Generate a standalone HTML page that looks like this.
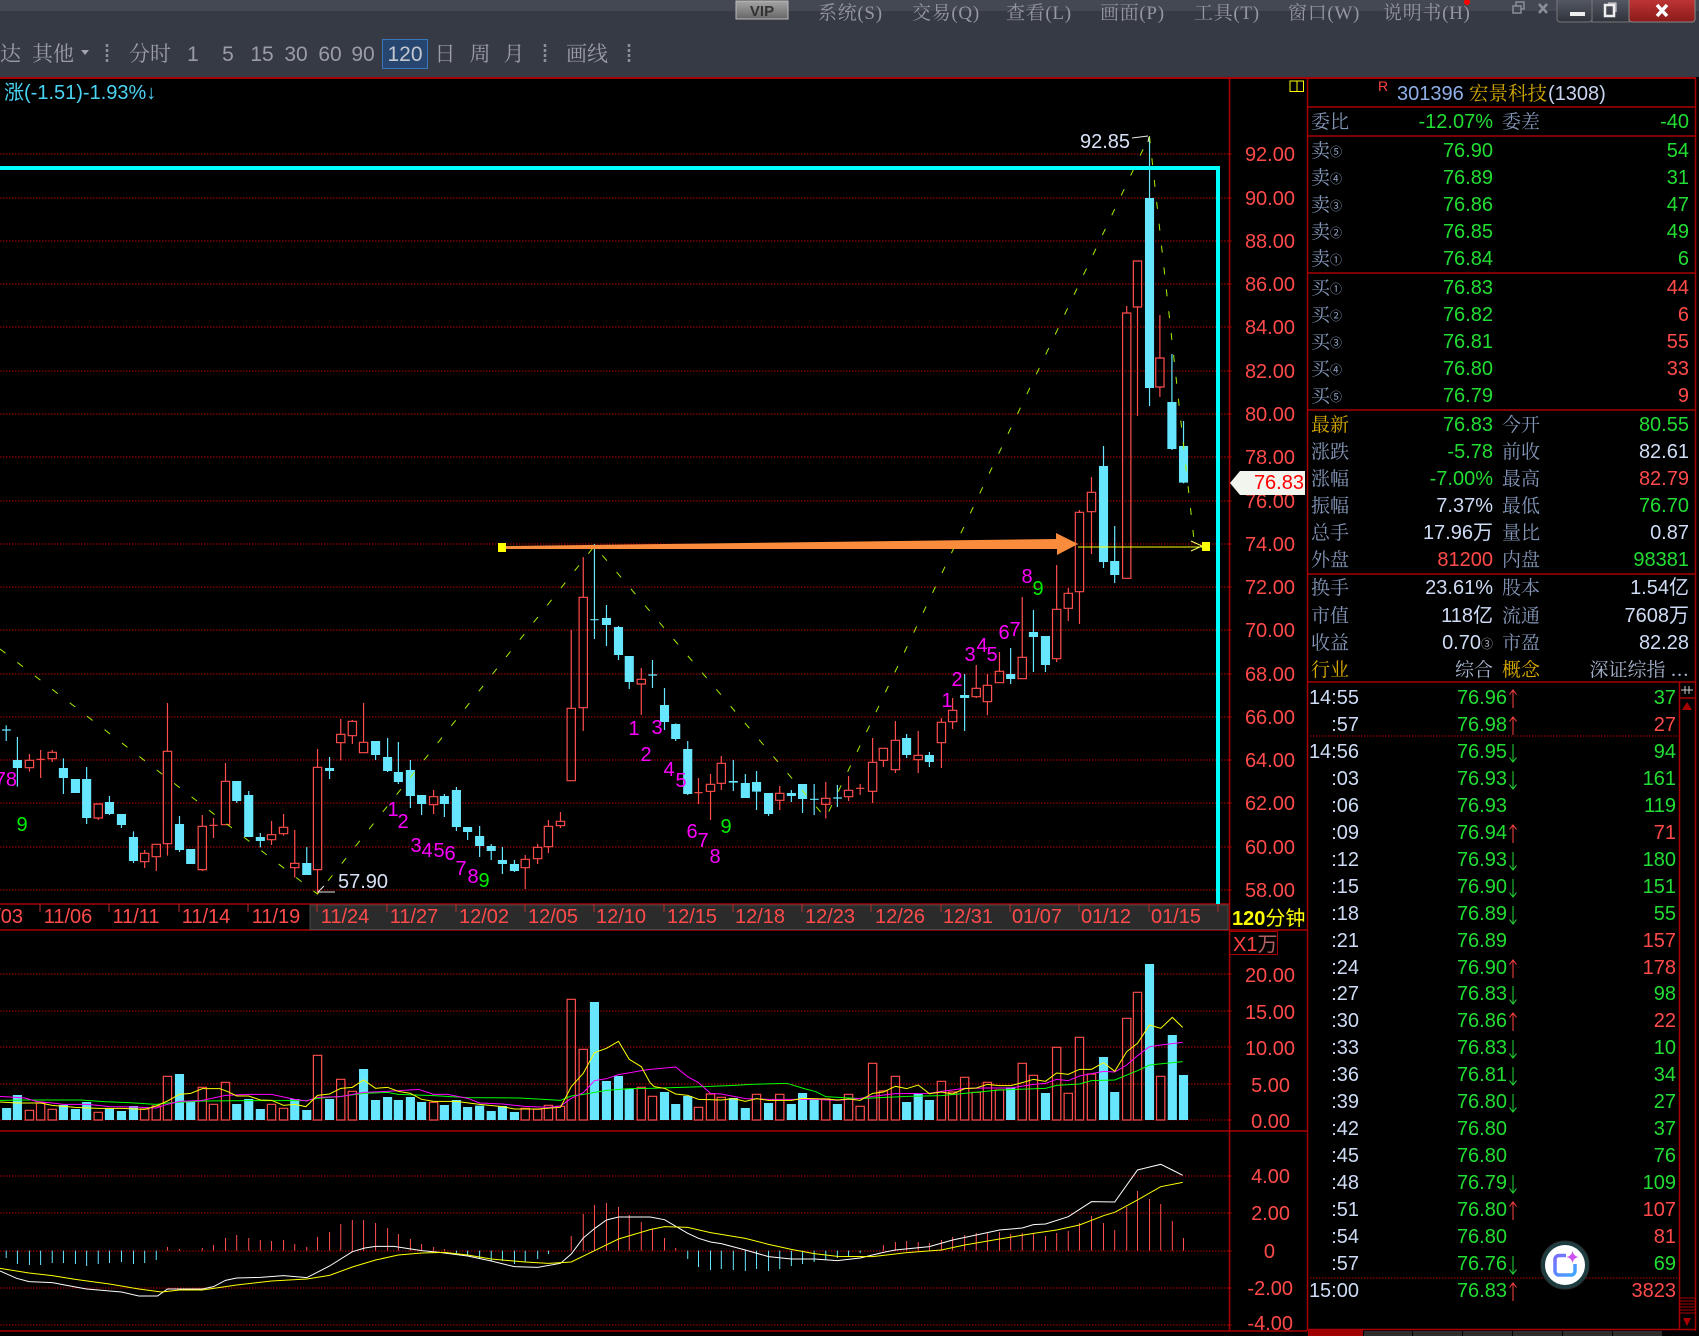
<!DOCTYPE html>
<html lang="zh"><head><meta charset="utf-8"><title>301396 宏景科技</title>
<style>
html,body{margin:0;padding:0;background:#000;width:1699px;height:1336px;overflow:hidden}
svg{display:block;position:absolute;left:0;top:0}
text{font-family:"Liberation Sans","Noto Sans CJK SC",sans-serif;font-size:20px}
path,polyline{vector-effect:non-scaling-stroke;fill:none}
.e{text-anchor:end}.m{text-anchor:middle}
.g{fill:#22dd33}.r{fill:#ff4a4a}.w{fill:#cfdcf6}.y{fill:#ffff00}.p{fill:#ff00ff}.n{fill:#00ee00}
.l{font-family:"Noto Serif CJK SC","Noto Sans CJK SC",serif;font-size:19px;fill:#8496b8}
.o{font-family:"Noto Serif CJK SC","Noto Sans CJK SC",serif;font-size:19px;fill:#d8aa00}
.c{font-family:"Noto Sans CJK SC","DejaVu Sans",sans-serif;font-size:12px;fill:#8fa2c4}
.mn{font-family:"Liberation Serif","Noto Serif CJK SC",serif;font-size:19px;fill:#94979f;letter-spacing:.7px}
.tb{font-size:21px;fill:#9a9da7;font-family:"Liberation Sans","Noto Serif CJK SC",sans-serif}
.ln{stroke:#a80000;stroke-width:1.5;fill:none}
.gd{stroke:#c00000;stroke-width:1;stroke-dasharray:1.500 1.500;fill:none}
</style></head><body>
<svg width="1699" height="1336" viewBox="0 0 1699 1336" xmlns="http://www.w3.org/2000/svg">
<defs>
<path id="up" d="M1513 4V-14M1509.5 -9.5L1513 -14L1516.5 -9.5" style="fill:none;stroke:#ff4444;stroke-width:1"/>
<path id="dn" d="M1513 -14V4M1509.5 -0.5L1513 4L1516.5 -0.5" style="fill:none;stroke:#22dd33;stroke-width:1"/>
<linearGradient id="ib" x1="0" y1="0" x2="1" y2="1"><stop offset="0" stop-color="#7a6cff"/><stop offset="1" stop-color="#3fa8ff"/></linearGradient>
<linearGradient id="vb" x1="0" y1="0" x2="0" y2="1"><stop offset="0" stop-color="#a5a5a5"/><stop offset="1" stop-color="#666"/></linearGradient>
<linearGradient id="wb" x1="0" y1="0" x2="0" y2="1"><stop offset="0" stop-color="#565b66"/><stop offset="1" stop-color="#30333b"/></linearGradient>
<linearGradient id="rb" x1="0" y1="0" x2="0" y2="1"><stop offset="0" stop-color="#c23636"/><stop offset="1" stop-color="#8a1a1a"/></linearGradient>
</defs>
<rect width="1699" height="1336" fill="#000"/>
<!-- top bars -->
<rect width="1699" height="77" fill="#363a45"/>
<rect width="1699" height="11" fill="#444853"/>
<rect x="736" y="1" width="52" height="18" fill="url(#vb)" stroke="#bbb"/>
<text x="762" y="16" class="m" style="font-size:15px;font-weight:bold;fill:#333">VIP</text>
<g class="mn">
<text x="818" y="19" class="mn">系统(S)</text><text x="912" y="19" class="mn">交易(Q)</text><text x="1006" y="19" class="mn">查看(L)</text><text x="1100" y="19" class="mn">画面(P)</text><text x="1194" y="19" class="mn">工具(T)</text><text x="1288" y="19" class="mn">窗口(W)</text><text x="1383" y="19" class="mn">说明书(H)</text>
</g>
<circle cx="1467" cy="2" r="3" fill="#f00"/>
<path d="M1513 6h8v7h-8zM1516 6V2h8v7h-3" style="stroke:#8a8e98;stroke-width:1.5"/>
<path d="M1539 4l8 9M1547 4l-8 9" style="stroke:#8a8e98;stroke-width:2.5"/>
<rect x="1557" y="-2" width="35" height="24" rx="3" fill="url(#wb)" stroke="#777"/>
<rect x="1592" y="-2" width="37" height="24" fill="url(#wb)" stroke="#777"/>
<rect x="1629" y="-2" width="66" height="24" rx="3" fill="url(#rb)" stroke="#888"/>
<rect x="1570" y="12" width="15" height="4" fill="#eee"/>
<rect x="1605" y="5" width="9" height="11" fill="none" stroke="#eee" stroke-width="2.5"/>
<path d="M1608 3h8v9" style="stroke:#ddd;stroke-width:1"/>
<path d="M1657 5l10 11M1667 5l-10 11" style="stroke:#fff;stroke-width:3.5"/>
<!-- toolbar -->
<text x="0" y="61" class="tb">达</text><text x="32" y="61" class="tb">其他</text>
<path d="M81 50h8l-4 5z" style="fill:#a2a5ae"/>
<path d="M107 44V63M545 44V63M629 44V63" style="stroke:#8c8f98;stroke-width:2.5;stroke-dasharray:3 2"/>
<text x="129" y="61" class="tb">分时</text>
<rect x="382.500" y="39.500" width="45" height="29" fill="#27466f" stroke="#3a76c0"/>
<g style="text-anchor:middle">
<text x="193" y="61" class="tb">1</text><text x="228" y="61" class="tb">5</text><text x="262" y="61" class="tb">15</text><text x="296" y="61" class="tb">30</text><text x="330" y="61" class="tb">60</text><text x="363" y="61" class="tb">90</text><text x="405" y="61" class="tb" style="fill:#c5c8d0">120</text><text x="445" y="61" class="tb">日</text><text x="480" y="61" class="tb">周</text><text x="514" y="61" class="tb">月</text>
</g>
<text x="566" y="61" class="tb">画线</text>
<!-- frame lines -->
<path d="M0 78H1696" style="stroke:#a80000;stroke-width:2"/>
<path d="M1229.500 78V1331M1307.500 78V1331M1695.500 78V1331M1679.500 682V1329M0 904H1229M0 930H1307M0 1131H1307M0 1331H1307" class="ln"/>
<!-- grid -->
<path class="gd" d="M0 154H1233M0 198H1233M0 241H1233M0 284H1233M0 327H1233M0 371H1233M0 414H1233M0 457H1233M0 501H1233M0 544H1233M0 587H1233M0 630H1233M0 674H1233M0 717H1233M0 760H1233M0 803H1233M0 847H1233M0 890H1233M0 974H1233M0 1011H1233M0 1047H1233M0 1084H1233M0 1120H1233M0 1176H1233M0 1213H1233M0 1288H1233M0 1325H1233M0 1251H1233"/>
<!-- date axis -->
<rect x="310" y="905" width="918" height="24.500" fill="#2b2b2b" stroke="#4a4a4a" stroke-width="1"/>
<path d="M40 904v8M109 904v8M179 904v8M248 904v8M317 904v8M387 904v8M456 904v8M525 904v8M594 904v8M664 904v8M733 904v8M802 904v8M871 904v8M941 904v8M1010 904v8M1079 904v8M1149 904v8M1218 904v8" style="stroke:#b03030;stroke-width:1"/>
<g class="r">
<text x="23" y="923" class="e r">/03</text>
<text x="68" y="923" class="m r">11/06</text><text x="136" y="923" class="m r">11/11</text><text x="206" y="923" class="m r">11/14</text><text x="276" y="923" class="m r">11/19</text><text x="345" y="923" class="m r">11/24</text><text x="414" y="923" class="m r">11/27</text><text x="484" y="923" class="m r">12/02</text><text x="553" y="923" class="m r">12/05</text><text x="621" y="923" class="m r">12/10</text><text x="692" y="923" class="m r">12/15</text><text x="760" y="923" class="m r">12/18</text><text x="830" y="923" class="m r">12/23</text><text x="900" y="923" class="m r">12/26</text><text x="968" y="923" class="m r">12/31</text><text x="1037" y="923" class="m r">01/07</text><text x="1106" y="923" class="m r">01/12</text><text x="1176" y="923" class="m r">01/15</text>
</g>
<text x="1232" y="925" class="y" style="font-weight:bold">120<tspan style="font-weight:normal">分钟</tspan></text>
<rect x="1229.500" y="931.500" width="48" height="23" fill="none" stroke="#a80000"/>
<text x="1233" y="951" style="fill:#ff4444">X1<tspan style="fill:#b06060">万</tspan></text>
<!-- axis labels -->
<text x="1295" y="161" class="e r">92.00</text><text x="1295" y="205" class="e r">90.00</text><text x="1295" y="248" class="e r">88.00</text><text x="1295" y="291" class="e r">86.00</text><text x="1295" y="334" class="e r">84.00</text><text x="1295" y="378" class="e r">82.00</text><text x="1295" y="421" class="e r">80.00</text><text x="1295" y="464" class="e r">78.00</text><text x="1295" y="508" class="e r">76.00</text><text x="1295" y="551" class="e r">74.00</text><text x="1295" y="594" class="e r">72.00</text><text x="1295" y="637" class="e r">70.00</text><text x="1295" y="681" class="e r">68.00</text><text x="1295" y="724" class="e r">66.00</text><text x="1295" y="767" class="e r">64.00</text><text x="1295" y="810" class="e r">62.00</text><text x="1295" y="854" class="e r">60.00</text><text x="1295" y="897" class="e r">58.00</text>
<text x="1295" y="982" class="e r">20.00</text><text x="1295" y="1019" class="e r">15.00</text><text x="1295" y="1055" class="e r">10.00</text><text x="1290" y="1092" class="e r">5.00</text><text x="1290" y="1128" class="e r">0.00</text>
<text x="1290" y="1183" class="e r">4.00</text><text x="1290" y="1220" class="e r">2.00</text><text x="1275" y="1258" class="e r">0</text><text x="1293" y="1295" class="e r">-2.00</text><text x="1293" y="1330" class="e r">-4.00</text>
<!-- small yellow box -->
<path d="M1290 81h13.500v10.500h-13.500zM1297 81v10.500" style="stroke:#ffff00;stroke-width:1"/>
<text x="4" y="99" style="fill:#4ad4f4">涨(-1.51)-1.93%↓</text>

<!-- candles left part -->
<g transform="translate(0,450) scale(0.41454,0.33333)">
<path style="stroke:#ff4d4d;stroke-width:1.2" d="M71 912V931M71 953V965M61 931h20V953h-20zM98 900V984M88 928h20M126 900V907M126 926V936M116 907h20V926h-20zM237 1104V1110M227 1062h20V1104h-20zM349 1200V1210M349 1235V1254M339 1210h20V1235h-20zM377 1220V1263M367 1183h20V1220h-20zM404 759V904M404 1181V1217M394 904h20V1181h-20zM488 1095V1129M488 1259V1263M478 1129h20V1259h-20zM515 1104V1164M505 1126h20M544 939V994M534 994h20V1124h-20zM655 1113V1154M655 1169V1185M645 1154h20V1169h-20zM684 1092V1132M684 1151V1157M674 1132h20V1151h-20zM711 1140V1240M711 1253V1283M701 1240h20V1253h-20zM766 897V952M766 1259V1329M756 952h20V1259h-20zM822 807V853M822 878V931M812 853h20V878h-20zM850 810V814M850 857V882M840 814h20V857h-20zM877 759V877M867 877h20V908h-20zM1046 1020V1040M1046 1064V1092M1036 1040h20V1064h-20zM1267 1215V1228M1267 1253V1317M1257 1228h20V1253h-20zM1297 1182V1192M1297 1226V1242M1287 1192h20V1226h-20zM1323 1110V1129M1323 1190V1209M1313 1129h20V1190h-20zM1352 1086V1114M1352 1127V1134M1342 1114h20V1127h-20zM1378 540V775M1368 775h20V992h-20zM1407 321V442M1407 773V843M1397 442h20V773h-20zM1547 654V688M1547 702V795M1537 688h20V702h-20z"/>
<path style="stroke:#66e6ff;stroke-width:1.2" d="M15 826V873M5 840h21M42 861V1010M153 925V1032M209 951V1122M264 1038V1095M293 1125V1134M322 1144V1239M433 1098V1206M571 1053V1059M600 1023V1161M628 1149V1192M740 1191V1275M795 921V987M906 915V930M935 864V966M961 876V1002M990 930V1074M1017 1062V1095M1072 1032V1101M1101 1011V1143M1128 1146V1170M1157 1128V1221M1185 1182V1230M1212 1191V1272M1241 1230V1266M1434 282V567M1424 509h20M1463 465V588M1492 528V630M1518 696V717"/>
<path style="fill:#66e6ff" d="M31 930h22V954h-22zM142 954h22V984h-22zM171 987h22V1029h-22zM198 987h22V1104h-22zM253 1056h22V1092h-22zM282 1092h22V1125h-22zM311 1161h22V1233h-22zM422 1122h22V1200h-22zM449 1197h22V1242h-22zM560 993h22V1053h-22zM589 1035h22V1161h-22zM617 1161h22V1173h-22zM729 1239h22V1275h-22zM784 954h22V963h-22zM895 873h22V915h-22zM924 921h22V963h-22zM950 966h22V996h-22zM979 960h22V1038h-22zM1006 1035h22V1062h-22zM1061 1038h22V1062h-22zM1090 1020h22V1131h-22zM1117 1131h22V1146h-22zM1146 1158h22V1188h-22zM1174 1188h22V1203h-22zM1201 1230h22V1242h-22zM1230 1242h22V1263h-22zM1452 504h22V525h-22zM1481 531h22V615h-22zM1507 618h22V696h-22z"/>
</g>
<!-- candles right part -->
<g transform="translate(650,450) scale(0.41454,0.33333)">
<path style="stroke:#ff4d4d;stroke-width:1.2" d="M117 984V1062M107 1028h20M146 972V1003M146 1024V1110M136 1003h20V1024h-20zM172 918V940M172 1000V1020M162 940h20V1000h-20zM313 1008V1030M313 1051V1080M303 1030h20V1051h-20zM424 996V1045M424 1063V1105M414 1045h20V1063h-20zM479 978V1021M479 1040V1053M469 1021h20V1040h-20zM507 1002V1035M497 1015h20M537 864V937M537 1024V1059M527 937h20V1024h-20zM563 931V951M553 895h20V931h-20zM592 813V871M592 959V969M582 871h20V959h-20zM647 843V916M647 929V969M637 916h20V929h-20zM703 804V817M703 878V954M693 817h20V878h-20zM730 744V781M730 815V837M720 781h20V815h-20zM787 645V715M787 740V744M777 715h20V740h-20zM814 672V706M814 755V795M804 706h20V755h-20zM843 606V664M833 664h20V698h-20zM898 441V622M888 622h20V686h-20zM981 345V478M981 626V636M971 478h20V626h-20zM1009 414V430M1009 475V513M999 430h20V475h-20zM1036 180V187M1036 425V522M1026 187h20V425h-20zM1065 81V127M1065 185V312M1055 127h20V185h-20zM1150 -432V-411M1140 -411h20V385h-20zM1176 -429V-102M1166 -567h20V-429h-20zM1230 -405V-276M1230 -189V-159M1220 -276h20V-189h-20z"/>
<path style="stroke:#66e6ff;stroke-width:1.2" d="M6 630V714M-4 675h21M35 714V840M62 820V873M91 873V1035M201 930V1023M230 972V1044M257 963V1080M286 1029V1098M341 1020V1056M368 1002V1089M396 1002V1095M386 1048h21M452 1005V1071M442 1044h21M619 852V924M674 906V951M759 672V843M870 594V702M925 480V666M954 558V666M1094 -12V354M1121 228V399M1205 -942V-132M1259 -288V0M1287 -87V100"/>
<path style="fill:#66e6ff" d="M24 765h22V816h-22zM51 822h22V867h-22zM80 897h22V1032h-22zM190 993h22V998h-22zM219 999h22V1044h-22zM246 996h22V1025h-22zM275 1029h22V1092h-22zM330 1029h22V1038h-22zM357 1002h22V1047h-22zM608 864h22V915h-22zM663 915h22V936h-22zM748 735h22V744h-22zM859 672h22V687h-22zM914 546h22V561h-22zM943 558h22V645h-22zM1083 48h22V336h-22zM1110 333h22V375h-22zM1194 -756h22V-186h-22zM1248 -144h22V-3h-22zM1276 -12h22V98h-22z"/>
</g>
<!-- zigzag -->
<path d="M0 649L317.500 894L594.400 546L825.700 818L1149.400 136L1194 540" style="stroke:#a8f000;stroke-width:1;stroke-dasharray:7 15"/>
<path d="M1132 138l8 -1l8 -1M1149 137l-1 5M318 892H335M318 892l6 -6" style="stroke:#e8e8e8;stroke-width:1"/>
<text x="1080" y="148" style="fill:#d8e2f6">92.85</text>
<text x="338" y="888" style="fill:#d8e2f6">57.90</text>
<!-- cyan frame -->
<path d="M0 168H1218V904" style="stroke:#00ffff;stroke-width:4"/>
<!-- orange arrow and line -->
<path d="M506 546L1056 539V533L1078 544L1057 555V549L506 549z" style="fill:#f98b3c"/>
<path d="M1078 547H1206" style="stroke:#ffff00;stroke-width:1"/>
<rect x="498" y="543" width="8" height="9" fill="#ffff00"/>
<rect x="1202" y="542" width="8" height="9" fill="#ffff00"/>
<path d="M1191 541L1202 546L1191 551" style="stroke:#ffff66;stroke-width:1"/>
<!-- TD numbers -->
<text x="17" y="786" class="e p">78</text><text x="22" y="831" class="m n">9</text>
<text x="393" y="816" class="m p">1</text><text x="403" y="828" class="m p">2</text><text x="416" y="852" class="m p">3</text><text x="427" y="857" class="m p">4</text><text x="439" y="857" class="m p">5</text><text x="450" y="860" class="m p">6</text><text x="461" y="875" class="m p">7</text><text x="473" y="883" class="m p">8</text><text x="484" y="887" class="m n">9</text>
<text x="634" y="735" class="m p">1</text><text x="646" y="761" class="m p">2</text><text x="657" y="734" class="m p">3</text><text x="669" y="776" class="m p">4</text><text x="681" y="787" class="m p">5</text><text x="692" y="838" class="m p">6</text><text x="703" y="847" class="m p">7</text><text x="715" y="863" class="m p">8</text><text x="726" y="833" class="m n">9</text>
<text x="947" y="707" class="m p">1</text><text x="957" y="686" class="m p">2</text><text x="970" y="661" class="m p">3</text><text x="982" y="652" class="m p">4</text><text x="992" y="661" class="m p">5</text><text x="1004" y="639" class="m p">6</text><text x="1015" y="636" class="m p">7</text><text x="1027" y="583" class="m p">8</text><text x="1038" y="595" class="m n">9</text>
<!-- price tag -->
<path d="M1230 483L1240 471H1305V495H1240z" style="fill:#f2f5ee"/>
<text x="1304" y="489" class="e" style="fill:#f00">76.83</text>

<!-- volume + macd left -->
<g transform="translate(0,920) scale(0.41454,0.33333)">
<path style="fill:#66e6ff" d="M5 564h22V600h-22zM31 525h22V600h-22zM142 555h22V600h-22zM171 567h22V600h-22zM198 546h22V600h-22zM253 564h22V600h-22zM282 573h22V600h-22zM311 558h22V600h-22zM422 462h22V600h-22zM449 543h22V600h-22zM560 552h22V600h-22zM589 537h22V600h-22zM617 567h22V600h-22zM700 537h22V600h-22zM729 570h22V600h-22zM784 537h22V600h-22zM866 447h22V600h-22zM895 540h22V600h-22zM924 531h22V600h-22zM950 540h22V600h-22zM979 531h22V600h-22zM1006 546h22V600h-22zM1061 555h22V600h-22zM1090 540h22V600h-22zM1117 561h22V600h-22zM1146 557h22V600h-22zM1174 573h22V600h-22zM1201 558h22V600h-22zM1230 576h22V600h-22zM1423 246h22V600h-22zM1452 483h22V600h-22zM1481 468h22V600h-22zM1507 506h22V600h-22z"/>
<path style="stroke:#ff4d4d;stroke-width:1.2" d="M61 571h20V600h-20zM88 549h20V600h-20zM116 568h20V600h-20zM227 577h20V600h-20zM339 567h20V600h-20zM367 558h20V600h-20zM394 469h20V600h-20zM478 502h20V600h-20zM505 553h20V600h-20zM534 487h20V600h-20zM645 553h20V600h-20zM674 565h20V600h-20zM756 406h20V600h-20zM812 478h20V600h-20zM840 514h20V600h-20zM1036 547h20V600h-20zM1257 565h20V600h-20zM1287 568h20V600h-20zM1313 556h20V600h-20zM1342 559h20V600h-20zM1368 238h20V600h-20zM1397 388h20V600h-20zM1537 502h20V600h-20z"/>
<polyline style="stroke:#00ff00;stroke-width:1" points="0,541 70,540 195,540 250,545 310,548 377,553 404,549 488,543 600,542 740,542 766,535 822,529 877,520 935,517 961,523 1046,527 1128,533 1252,534 1312,538 1352,541 1378,528 1407,523 1463,511 1518,506 1568,505"/>
<polyline style="stroke:#ff00ff;stroke-width:1" points="0,529 60,534 90,545 126,549 153,553 209,553 237,556 264,560 322,561 377,564 404,553 433,544 488,541 544,526 600,523 655,523 711,538 740,543 766,532 822,530 877,517 935,514 1010,508 1046,523 1080,523 1128,535 1157,549 1212,552 1267,559 1323,562 1352,558 1378,535 1407,518 1434,482 1463,476 1492,464 1547,452 1568,448"/>
<polyline style="stroke:#ffff00;stroke-width:1" points="0,546 42,549 98,549 126,556 182,562 237,565 293,565 349,568 377,558 404,543 433,523 460,520 488,506 530,506 550,515 571,528 600,528 628,540 655,541 684,556 711,553 738,560 766,526 795,522 822,505 850,502 877,480 906,505 935,502 961,514 990,520 1017,538 1046,544 1101,544 1157,553 1212,560 1241,567 1297,567 1352,562 1378,500 1407,460 1434,398 1463,385 1492,364 1518,418 1547,440 1568,488"/>
<path style="stroke:#66e6ff;stroke-width:1" d="M15 992V1014M42 992V1032M71 992V1035M98 992V1035M126 992V1029M153 992V1029M182 992V1032M209 992V1038M237 992V1032M264 992V1029M293 992V1026M322 992V1032M349 992V1029M377 992V1020M1101 992V999M1128 992V1005M1157 992V1017M1185 992V1023M1212 992V1023M1241 992V1032M1267 992V1026M1297 992V1017M1323 992V1002"/>
<path style="stroke:#ff4d4d;stroke-width:1" d="M404 992V981M433 992V987M488 992V984M515 992V975M544 992V954M571 992V945M600 992V954M628 992V960M655 992V963M684 992V960M711 992V972M740 992V981M766 992V951M795 992V936M822 992V912M850 992V900M877 992V900M906 992V909M935 992V924M961 992V942M990 992V957M1017 992V972M1046 992V981M1072 992V987M1378 992V948M1407 992V882M1434 992V855M1463 992V849M1492 992V861M1518 992V885M1547 992V906"/>
<polyline style="stroke:#fff;stroke-width:1" points="0,1053 40,1075 70,1085 126,1088 182,1101 209,1107 293,1116 335,1128 380,1128 404,1107 488,1107 515,1100 544,1081 571,1074 628,1072 684,1067 740,1073 795,1038 850,995 880,984 906,979 950,979 1017,992 1060,997 1128,1008 1185,1023 1241,1040 1297,1042 1352,1030 1378,1002 1407,954 1434,926 1463,900 1492,891 1568,891"/>
<polyline style="stroke:#ffff00;stroke-width:1" points="0,1045 70,1059 126,1067 182,1078 264,1092 335,1107 390,1116 433,1110 488,1110 571,1095 655,1083 740,1077 795,1066 850,1041 906,1020 961,1005 1017,999 1072,997 1128,1005 1185,1017 1267,1026 1323,1030 1378,1026 1434,992 1492,957 1568,929"/>
</g>
<!-- volume + macd right -->
<g transform="translate(650,920) scale(0.41454,0.33333)">
<path style="fill:#66e6ff" d="M24 516h22V600h-22zM51 552h22V600h-22zM80 528h22V600h-22zM190 534h22V600h-22zM219 564h22V600h-22zM275 549h22V600h-22zM330 552h22V600h-22zM357 519h22V600h-22zM385 537h22V600h-22zM441 552h22V600h-22zM608 546h22V600h-22zM636 522h22V600h-22zM663 540h22V600h-22zM859 502h22V600h-22zM943 519h22V600h-22zM1083 411h22V600h-22zM1110 516h22V600h-22zM1194 132h22V600h-22zM1249 345h22V600h-22zM1276 465h22V600h-22z"/>
<path style="stroke:#ff4d4d;stroke-width:1.2" d="M-4 529h20V600h-20zM107 562h20V600h-20zM136 522h20V600h-20zM162 532h20V600h-20zM247 523h20V600h-20zM303 523h20V600h-20zM414 537h20V600h-20zM469 523h20V600h-20zM497 559h20V600h-20zM527 430h20V600h-20zM553 513h20V600h-20zM582 469h20V600h-20zM693 484h20V600h-20zM720 516h20V600h-20zM749 472h20V600h-20zM777 517h20V600h-20zM804 487h20V600h-20zM833 510h20V600h-20zM888 430h20V600h-20zM915 466h20V600h-20zM971 382h20V600h-20zM999 520h20V600h-20zM1026 352h20V600h-20zM1055 462h20V600h-20zM1140 295h20V600h-20zM1166 217h20V600h-20zM1222 469h20V600h-20z"/>
<polyline style="stroke:#00ff00;stroke-width:1" points="0,505 130,500 190,497 245,493 330,490 370,505 400,515 424,530 507,536 620,529 703,527 759,520 843,510 954,505 981,496 1036,492 1065,482 1121,480 1176,452 1205,435 1260,428 1285,425"/>
<polyline style="stroke:#ff00ff;stroke-width:1" points="0,448 62,441 91,470 117,488 146,520 172,522 230,536 286,538 341,538 396,538 452,541 507,535 537,529 592,521 674,520 703,514 759,505 814,504 870,504 925,493 954,490 981,478 1009,482 1036,468 1094,454 1121,456 1150,435 1176,407 1205,380 1232,375 1285,367"/>
<polyline style="stroke:#ffff00;stroke-width:1" points="0,488 10,500 35,505 62,522 91,526 117,538 172,540 201,536 230,544 257,536 286,541 341,541 368,535 424,537 452,540 479,537 507,541 537,520 563,516 592,499 619,506 647,495 674,521 703,516 730,522 759,506 787,504 814,493 843,497 870,497 898,488 925,478 954,484 981,459 1009,463 1036,448 1065,448 1094,428 1121,454 1150,395 1176,370 1205,315 1232,325 1260,292 1285,322"/>
<path style="stroke:#ff4d4d;stroke-width:1" d="M6 992V925M35 992V954M62 992V984M563 992V975M592 992V966M619 992V963M647 992V966M674 992V969M703 992V960M730 992V951M759 992V945M787 992V939M814 992V939M843 992V936M870 992V942M898 992V939M925 992V939M954 992V948M981 992V939M1009 992V933M1036 992V909M1065 992V888M1094 992V909M1121 992V930M1150 992V861M1176 992V813M1205 992V837M1232 992V852M1260 992V903M1287 992V954"/>
<path style="stroke:#66e6ff;stroke-width:1" d="M91 992V1017M117 992V1041M146 992V1050M172 992V1047M201 992V1050M230 992V1053M257 992V1047M286 992V1053M313 992V1047M341 992V1038M368 992V1032M396 992V1026M424 992V1020M452 992V1014M479 992V1008M507 992V999"/>
<polyline style="stroke:#fff;stroke-width:1" points="0,891 35,899 91,940 117,955 146,966 172,971 230,990 286,1010 341,1017 396,1017 452,1022 507,1014 563,997 592,990 674,980 730,960 787,945 843,930 898,924 925,914 954,912 1009,890 1065,845 1121,846 1176,750 1232,733 1260,750 1285,766"/>
<polyline style="stroke:#ffff00;stroke-width:1" points="0,929 35,920 91,922 146,938 230,955 286,973 341,988 396,1001 452,1009 537,1010 619,998 703,990 759,975 843,957 925,940 981,930 1036,915 1094,887 1121,877 1176,840 1232,800 1285,787"/>
</g>

<!-- right panel lines -->
<path class="ln" d="M1307 107H1695M1307 136H1695M1307 273H1695M1307 410H1695M1307 574H1695M1307 682H1695M1679 698H1695"/>
<!-- header -->
<text x="1378" y="91" style="font-size:14px;fill:#ff4444">R</text>
<text x="1397" y="100" style="fill:#8fb0e8">301396</text>
<text x="1469" y="100" style="fill:#d4a800;font-family:'Noto Serif CJK SC',serif;font-size:19.500px">宏景科技</text>
<text x="1548" y="100" style="fill:#c8d4f0">(1308)</text>
<text x="1311" y="128" class="l">委比</text><text x="1493" y="128" class="e g">-12.07%</text><text x="1502" y="128" class="l">委差</text><text x="1689" y="128" class="e g">-40</text>
<!-- order book -->
<text x="1311" y="157" class="l">卖</text><text x="1330" y="156" class="c">⑤</text><text x="1493" y="157" class="e g">76.90</text><text x="1689" y="157" class="e g">54</text>
<text x="1311" y="184" class="l">卖</text><text x="1330" y="183" class="c">④</text><text x="1493" y="184" class="e g">76.89</text><text x="1689" y="184" class="e g">31</text>
<text x="1311" y="211" class="l">卖</text><text x="1330" y="210" class="c">③</text><text x="1493" y="211" class="e g">76.86</text><text x="1689" y="211" class="e g">47</text>
<text x="1311" y="238" class="l">卖</text><text x="1330" y="237" class="c">②</text><text x="1493" y="238" class="e g">76.85</text><text x="1689" y="238" class="e g">49</text>
<text x="1311" y="265" class="l">卖</text><text x="1330" y="264" class="c">①</text><text x="1493" y="265" class="e g">76.84</text><text x="1689" y="265" class="e g">6</text>
<text x="1311" y="294" class="l">买</text><text x="1330" y="293" class="c">①</text><text x="1493" y="294" class="e g">76.83</text><text x="1689" y="294" class="e r">44</text>
<text x="1311" y="321" class="l">买</text><text x="1330" y="320" class="c">②</text><text x="1493" y="321" class="e g">76.82</text><text x="1689" y="321" class="e r">6</text>
<text x="1311" y="348" class="l">买</text><text x="1330" y="347" class="c">③</text><text x="1493" y="348" class="e g">76.81</text><text x="1689" y="348" class="e r">55</text>
<text x="1311" y="375" class="l">买</text><text x="1330" y="374" class="c">④</text><text x="1493" y="375" class="e g">76.80</text><text x="1689" y="375" class="e r">33</text>
<text x="1311" y="402" class="l">买</text><text x="1330" y="401" class="c">⑤</text><text x="1493" y="402" class="e g">76.79</text><text x="1689" y="402" class="e r">9</text>
<!-- stats -->
<text x="1311" y="431" class="o">最新</text><text x="1493" y="431" class="e g">76.83</text><text x="1502" y="431" class="l">今开</text><text x="1689" y="431" class="e g">80.55</text>
<text x="1311" y="458" class="l">涨跌</text><text x="1493" y="458" class="e g">-5.78</text><text x="1502" y="458" class="l">前收</text><text x="1689" y="458" class="e w">82.61</text>
<text x="1311" y="485" class="l">涨幅</text><text x="1493" y="485" class="e g">-7.00%</text><text x="1502" y="485" class="l">最高</text><text x="1689" y="485" class="e r">82.79</text>
<text x="1311" y="512" class="l">振幅</text><text x="1493" y="512" class="e w">7.37%</text><text x="1502" y="512" class="l">最低</text><text x="1689" y="512" class="e g">76.70</text>
<text x="1311" y="539" class="l">总手</text><text x="1493" y="539" class="e w">17.96万</text><text x="1502" y="539" class="l">量比</text><text x="1689" y="539" class="e w">0.87</text>
<text x="1311" y="566" class="l">外盘</text><text x="1493" y="566" class="e r">81200</text><text x="1502" y="566" class="l">内盘</text><text x="1689" y="566" class="e g">98381</text>
<text x="1311" y="594" class="l">换手</text><text x="1493" y="594" class="e w">23.61%</text><text x="1502" y="594" class="l">股本</text><text x="1689" y="594" class="e w">1.54亿</text>
<text x="1311" y="622" class="l">市值</text><text x="1493" y="622" class="e w">118亿</text><text x="1502" y="622" class="l">流通</text><text x="1689" y="622" class="e w">7608万</text>
<text x="1311" y="649" class="l">收益</text><text x="1481" y="649" class="e w">0.70</text><text x="1481" y="648" class="c" style="fill:#aab">③</text><text x="1502" y="649" class="l">市盈</text><text x="1689" y="649" class="e w">82.28</text>
<text x="1311" y="676" class="o">行业</text><text x="1493" y="676" class="e l" style="fill:#a9b6d0">综合</text><text x="1502" y="676" class="o">概念</text><text x="1689" y="676" class="e l" style="fill:#a9b6d0">深证综指 ...</text>
<!-- ticks -->
<text x="1359" y="704" class="e w">14:55</text><text x="1507" y="704" class="e g">76.96</text><use href="#up" y="704"/><text x="1676" y="704" class="e g">37</text>
<text x="1359" y="731" class="e w">:57</text><text x="1507" y="731" class="e g">76.98</text><use href="#up" y="731"/><text x="1676" y="731" class="e r">27</text>
<text x="1359" y="758" class="e w">14:56</text><text x="1507" y="758" class="e g">76.95</text><use href="#dn" y="758"/><text x="1676" y="758" class="e g">94</text>
<text x="1359" y="785" class="e w">:03</text><text x="1507" y="785" class="e g">76.93</text><use href="#dn" y="785"/><text x="1676" y="785" class="e g">161</text>
<text x="1359" y="812" class="e w">:06</text><text x="1507" y="812" class="e g">76.93</text><text x="1676" y="812" class="e g">119</text>
<text x="1359" y="839" class="e w">:09</text><text x="1507" y="839" class="e g">76.94</text><use href="#up" y="839"/><text x="1676" y="839" class="e r">71</text>
<text x="1359" y="866" class="e w">:12</text><text x="1507" y="866" class="e g">76.93</text><use href="#dn" y="866"/><text x="1676" y="866" class="e g">180</text>
<text x="1359" y="893" class="e w">:15</text><text x="1507" y="893" class="e g">76.90</text><use href="#dn" y="893"/><text x="1676" y="893" class="e g">151</text>
<text x="1359" y="920" class="e w">:18</text><text x="1507" y="920" class="e g">76.89</text><use href="#dn" y="920"/><text x="1676" y="920" class="e g">55</text>
<text x="1359" y="947" class="e w">:21</text><text x="1507" y="947" class="e g">76.89</text><text x="1676" y="947" class="e r">157</text>
<text x="1359" y="974" class="e w">:24</text><text x="1507" y="974" class="e g">76.90</text><use href="#up" y="974"/><text x="1676" y="974" class="e r">178</text>
<text x="1359" y="1000" class="e w">:27</text><text x="1507" y="1000" class="e g">76.83</text><use href="#dn" y="1000"/><text x="1676" y="1000" class="e g">98</text>
<text x="1359" y="1027" class="e w">:30</text><text x="1507" y="1027" class="e g">76.86</text><use href="#up" y="1027"/><text x="1676" y="1027" class="e r">22</text>
<text x="1359" y="1054" class="e w">:33</text><text x="1507" y="1054" class="e g">76.83</text><use href="#dn" y="1054"/><text x="1676" y="1054" class="e g">10</text>
<text x="1359" y="1081" class="e w">:36</text><text x="1507" y="1081" class="e g">76.81</text><use href="#dn" y="1081"/><text x="1676" y="1081" class="e g">34</text>
<text x="1359" y="1108" class="e w">:39</text><text x="1507" y="1108" class="e g">76.80</text><use href="#dn" y="1108"/><text x="1676" y="1108" class="e g">27</text>
<text x="1359" y="1135" class="e w">:42</text><text x="1507" y="1135" class="e g">76.80</text><text x="1676" y="1135" class="e g">37</text>
<text x="1359" y="1162" class="e w">:45</text><text x="1507" y="1162" class="e g">76.80</text><text x="1676" y="1162" class="e g">76</text>
<text x="1359" y="1189" class="e w">:48</text><text x="1507" y="1189" class="e g">76.79</text><use href="#dn" y="1189"/><text x="1676" y="1189" class="e g">109</text>
<text x="1359" y="1216" class="e w">:51</text><text x="1507" y="1216" class="e g">76.80</text><use href="#up" y="1216"/><text x="1676" y="1216" class="e r">107</text>
<text x="1359" y="1243" class="e w">:54</text><text x="1507" y="1243" class="e g">76.80</text><text x="1676" y="1243" class="e r">81</text>
<text x="1359" y="1270" class="e w">:57</text><text x="1507" y="1270" class="e g">76.76</text><use href="#dn" y="1270"/><text x="1676" y="1270" class="e g">69</text>
<text x="1359" y="1297" class="e w">15:00</text><text x="1507" y="1297" class="e g">76.83</text><use href="#up" y="1297"/><text x="1676" y="1297" class="e r">3823</text>
<path class="gd" d="M1310 736H1678M1310 1278H1678"/>
<!-- scrollbar -->
<path d="M1681 690H1693M1685 686v8M1689 686v8" style="stroke:#ccc;stroke-width:1"/>
<path d="M1687 702L1682 710H1692z" style="fill:#a80000"/>
<path d="M1680 1298H1695M1680 1301H1695M1680 1304H1695M1680 1307H1695M1680 1310H1695M1680 1313H1695" style="stroke:#a80000;stroke-width:1"/>
<path d="M1683 1318H1691L1687 1326z" style="fill:#a80000"/>
<!-- bottom tabs -->
<path d="M1307 1329.500H1696" style="stroke:#a80000;stroke-width:1.500"/>
<rect x="1308" y="1330" width="55" height="6" fill="#a00000"/>
<rect x="1364" y="1331" width="48" height="5" fill="#2e2e2e"/><rect x="1413" y="1331" width="49" height="5" fill="#2e2e2e"/><rect x="1463" y="1331" width="49" height="5" fill="#2e2e2e"/><rect x="1513" y="1331" width="49" height="5" fill="#2e2e2e"/><rect x="1563" y="1331" width="49" height="5" fill="#2e2e2e"/><rect x="1613" y="1331" width="49" height="5" fill="#2e2e2e"/>
<!-- floating icon -->
<circle cx="1565" cy="1265" r="24" fill="#1e3d40" stroke="#2a2e30" stroke-width="1"/>
<circle cx="1565" cy="1265" r="20" fill="#fff"/>
<path d="M1566 1255.500H1559a4 4 0 0 0 -4 4V1271a4 4 0 0 0 4 4H1571a4 4 0 0 0 4 -4V1264" style="stroke:url(#ib);stroke-width:3.500"/>
<path d="M1572.500 1251q1 5 6 6q-5 1 -6 6q-1 -5 -6 -6q5 -1 6 -6z" style="fill:#d050f0"/>
</svg>
</body></html>
